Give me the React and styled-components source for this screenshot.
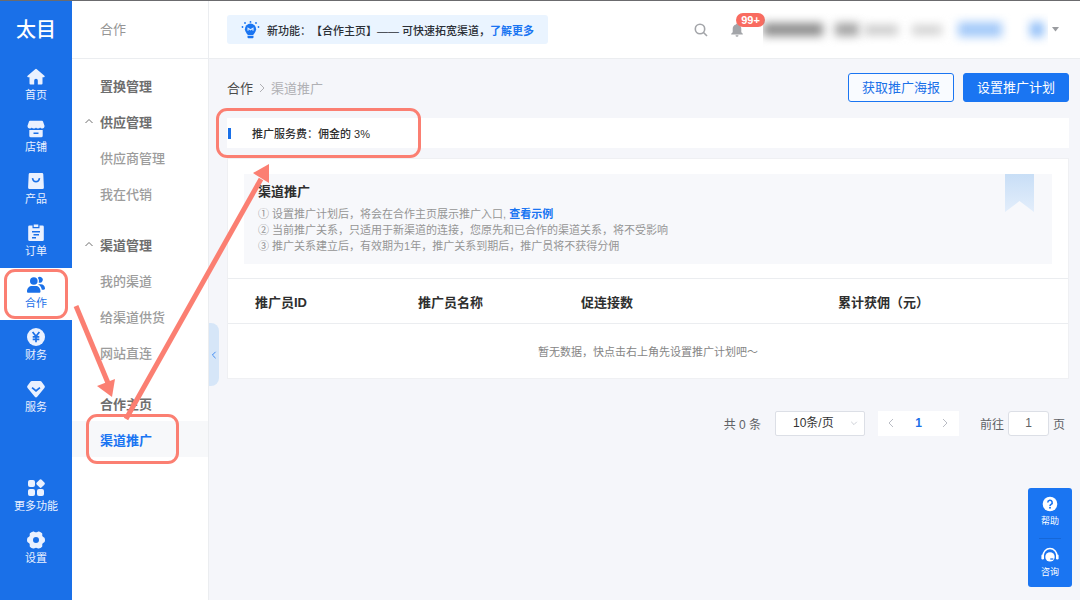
import React from "react";
import styled, { createGlobalStyle, css } from "styled-components";

const color = {
  brand: "#1a70e8",
  link: "#1a75f2",
  page: "#f5f6fa",
  line: "#ebedf0",
  mark: "#fb7f72",
  ink: "#333333",
  muted: "#959595",
};

const GlobalStyle = createGlobalStyle`
  *, *::before, *::after { box-sizing: border-box; }
  body {
    margin: 0;
    background: ${color.page};
    color: ${color.ink};
    font-family: "Liberation Sans", "Noto Sans CJK SC", sans-serif;
    font-size: 11px;
    text-spacing-trim: space-all;
  }
  ul, ol, h1, h2, p { margin: 0; padding: 0; list-style: none; }
  a { color: inherit; text-decoration: none; }
  button, input, select { font: inherit; color: inherit; margin: 0; }
  button { cursor: pointer; }
  svg { display: block; flex: none; }
`;

const Shell = styled.div`
  position: relative;
  display: grid;
  grid-template-columns: 72px 137px minmax(0, 1fr);
  min-height: 100vh;
  border-top: 1px solid #6b6b6e;
`;

/* ---------- primary sidebar ---------- */

const Sidebar = styled.nav`
  display: flex;
  flex-direction: column;
  background: ${color.brand};
  padding-bottom: 25px;
`;

const Logo = styled.div`
  height: 59px;
  line-height: 59px;
  text-align: center;
  font-size: 20px;
  font-weight: 500;
  color: #fff;
`;

const NavList = styled.ul`
  display: flex;
  flex-direction: column;
  ${(p) => p.$bottom && css`margin-top: auto;`}
`;

const NavItem = styled.li`
  position: relative;
`;

const NavLink = styled.a`
  display: flex;
  flex-direction: column;
  align-items: center;
  height: 52px;
  padding-top: 8px;
  line-height: 18px;
  font-size: 11px;
  color: ${(p) => (p.$active ? color.brand : "#eaf1ff")};
  background: ${(p) => (p.$active ? "#fff" : "transparent")};
`;

/* ---------- secondary menu ---------- */

const SubMenu = styled.nav`
  background: #fff;
  border-right: 1px solid ${color.line};
`;

const SubHeader = styled.div`
  height: 58px;
  padding-left: 28px;
  line-height: 58px;
  font-size: 13px;
  color: ${color.muted};
  border-bottom: 1px solid ${color.line};
`;

const SubGroups = styled.div`
  display: flex;
  flex-direction: column;
  gap: 15px;
  padding-top: 8px;
`;

const SubItem = styled.li`
  position: relative;
`;

const SubLink = styled.a`
  display: flex;
  align-items: center;
  height: 36px;
  font-size: 13px;
  font-weight: ${(p) => (p.$kind === "child" ? 500 : 700)};
  color: ${(p) =>
    p.$kind === "active" ? color.link : p.$kind === "child" ? "#9c9c9c" : "#6e6e6e"};
  background: ${(p) => (p.$kind === "active" ? "#f7f8fa" : "transparent")};
`;

const Fold = styled.span`
  display: flex;
  width: 28px;
  padding-left: 12px;
`;

/* ---------- content ---------- */

const Main = styled.main`
  position: relative;
  min-width: 0;
`;

const CollapseTab = styled.button`
  position: absolute;
  top: 322px;
  left: 0;
  display: flex;
  align-items: center;
  justify-content: center;
  width: 10px;
  height: 63px;
  padding: 0;
  border: 0;
  border-radius: 0 8px 8px 0;
  background: #d6e6f8;
  color: ${color.link};
`;

const TopBar = styled.header`
  display: flex;
  align-items: center;
  height: 58px;
  padding: 0 21px 0 18px;
  background: #fff;
  border-bottom: 1px solid ${color.line};
`;

const News = styled.div`
  display: flex;
  align-items: center;
  height: 29px;
  padding: 0 14px;
  gap: 7px;
  border-radius: 3px;
  background: #eaf4ff;
  font-weight: 500;
  color: #2b2f36;
  white-space: nowrap;
`;

const TextLink = styled.a`
  font-weight: 700;
  color: ${color.link};
`;

const Tools = styled.div`
  display: flex;
  align-items: center;
  margin-left: auto;
`;

const IconButton = styled.button`
  position: relative;
  display: flex;
  align-items: center;
  justify-content: center;
  width: 20px;
  height: 20px;
  margin-right: 16px;
  padding: 0;
  border: 0;
  background: none;
  color: #a3a5a9;
`;

const Badge = styled.span`
  position: absolute;
  left: 9px;
  top: -7px;
  width: 29px;
  height: 14px;
  border-radius: 7px;
  background: #f96b60;
  color: #fff;
  font-size: 11px;
  font-weight: 700;
  line-height: 14px;
  text-align: center;
`;

const Masked = styled.div`
  display: flex;
  align-items: center;
  width: 285px;
  height: 34px;
  margin-right: 4px;
  overflow: hidden;
`;

const Smudge = styled.span`
  flex: none;
  width: ${(p) => p.$w}px;
  height: ${(p) => p.$h || 13}px;
  margin-right: ${(p) => p.$gap}px;
  background: ${(p) => p.$tone};
  filter: blur(5px);
`;

const Content = styled.div`
  display: flex;
  flex-direction: column;
  padding: 14px 11px 0 18px;
`;

const HeadRow = styled.div`
  display: flex;
  align-items: center;
  justify-content: space-between;
  height: 29px;
`;

const Crumbs = styled.ol`
  display: flex;
  align-items: center;
  gap: 4px;
  font-size: 13px;
  color: #b0b0b4;

  li:first-child { color: #4a4a4a; }
`;

const Actions = styled.div`
  display: flex;
  gap: 9px;
`;

const Button = styled.button`
  height: 29px;
  padding: 0 13px;
  border: 1px solid ${color.link};
  border-radius: 3px;
  font-size: 13px;
  line-height: 16px;
  color: ${(p) => (p.$primary ? "#fff" : color.brand)};
  background: ${(p) => (p.$primary ? color.link : "#f9fbff")};
`;

const FeeBar = styled.div`
  position: relative;
  display: flex;
  align-items: center;
  gap: 21px;
  height: 30px;
  margin-top: 16px;
  padding-left: 1px;
  background: #fff;
  font-weight: 500;
  color: #2f2f2f;

  &::before {
    content: "";
    width: 3px;
    height: 11px;
    background: ${color.brand};
  }
`;

const Card = styled.section`
  margin-top: 10px;
  background: #fff;
  border: 1px solid #eff0f3;
`;

const Notice = styled.div`
  position: relative;
  margin: 15px 16px 14px;
  padding: 8px 14px 10px;
  background: #f7f8fb;
  line-height: 16px;
  color: ${color.muted};
`;

const NoticeTitle = styled.h2`
  margin-bottom: 4px;
  font-size: 13px;
  line-height: 20px;
  color: #2f2f2f;
`;

const Ribbon = styled.svg`
  position: absolute;
  top: 0;
  right: 18px;
`;

const Table = styled.table`
  width: 100%;
  table-layout: fixed;
  border-collapse: collapse;
`;

const Th = styled.th`
  width: ${(p) => p.$width || "auto"};
  height: 45px;
  padding: 0 0 0 27px;
  border-top: 1px solid ${color.line};
  border-bottom: 1px solid ${color.line};
  text-align: left;
  font-size: 13px;
  font-weight: 700;
  color: #2f2f2f;
`;

const Empty = styled.td`
  height: 54px;
  padding: 0;
  text-align: center;
  color: #858585;
`;

const Pagination = styled.div`
  display: flex;
  align-items: center;
  justify-content: flex-end;
  margin-top: 32px;
  padding-right: 4px;
  font-size: 12px;
  color: #606266;
  white-space: nowrap;
`;

const SelectWrap = styled.div`
  display: grid;
  align-items: center;
  width: 90px;
  margin: 0 13px 0 14px;

  > * { grid-area: 1 / 1; }
  > svg { justify-self: end; margin-right: 7px; pointer-events: none; color: #c0c4cc; }
`;

const PageSize = styled.select`
  appearance: none;
  width: 100%;
  height: 25px;
  padding: 0 17px;
  border: 1px solid #dcdfe6;
  border-radius: 2px;
  background: #fff;
  color: ${color.ink};
`;

const Pager = styled.nav`
  display: flex;
  width: 81px;
  height: 25px;
  margin-right: 21px;
  background: #fff;
`;

const PagerButton = styled.button`
  display: flex;
  flex: 1;
  align-items: center;
  justify-content: center;
  padding: 0;
  border: 0;
  background: none;
  font-weight: 700;
  color: ${(p) => (p.$current ? color.brand : "#b9bcc4")};
`;

const Jump = styled.label`
  display: flex;
  align-items: center;
  gap: 4px;
`;

const JumpInput = styled.input`
  width: 41px;
  height: 25px;
  padding: 0;
  border: 1px solid #dcdfe6;
  border-radius: 3px;
  background: #fff;
  text-align: center;
`;

const HelpDock = styled.aside`
  position: fixed;
  right: 8px;
  bottom: 13px;
  width: 44px;
  padding: 0 11px;
  border-radius: 3px;
  background: ${color.link};
`;

const HelpButton = styled.button`
  display: flex;
  flex-direction: column;
  align-items: center;
  width: 100%;
  height: 50px;
  padding: 8px 0 0;
  border: 0;
  background: none;
  color: #fff;
  font-size: 9px;
  line-height: 18px;
  white-space: nowrap;

  & + & { height: 49px; border-top: 1px solid #1567d8; }
`;

/* ---------- walkthrough marks ---------- */

const Highlight = styled.span`
  position: absolute;
  z-index: 2;
  inset: ${(p) => p.$inset};
  width: ${(p) => p.$width || "auto"};
  border: 3px solid ${color.mark};
  border-radius: 11px;
  pointer-events: none;
`;

const Arrows = styled.svg`
  position: absolute;
  z-index: 3;
  top: 160px;
  left: 70px;
  pointer-events: none;
`;

/* ---------- icons ---------- */

const Icon = ({ children, size = 18 }) => (
  <svg width={size} height={size} viewBox="0 0 18 18" fill="currentColor" aria-hidden="true">
    {children}
  </svg>
);

const Chevron = ({ dir, size = 10 }) => {
  const d = {
    up: "M1.5 7 5 3.5 8.5 7",
    down: "M1.5 3.5 5 7 8.5 3.5",
    left: "M7 1 3 5l4 4",
    right: "M3 1l4 4-4 4",
  }[dir];
  return (
    <svg width={size} height={size} viewBox="0 0 10 10" fill="none" stroke="currentColor" aria-hidden="true">
      <path d={d} />
    </svg>
  );
};

const icons = {
  home: (
    <path d="M8.2 1.2a1.200 1.200 0 0 1 1.600 0l7.600 6.600c.6.500.3 1.400-.5 1.400h-1.400v6.300a1 1 0 0 1-1 1h-3.700v-4a1.800 1.800 0 0 0-3.600 0v4H3.500a1 1 0 0 1-1-1V9.200H1.100c-.8 0-1.100-.9-.5-1.400z" />
  ),
  shop: (
    <path fillRule="evenodd" d="M3 .8h12a1 1 0 0 1 1 .7l1.500 4.300c.2 1.600-.9 2.700-2.200 2.700-.9 0-1.700-.4-2.100-1.100C12.700 8.100 12 8.500 11.100 8.500S9.400 8.100 9 7.400c-.4.700-1.200 1.100-2.100 1.100S5.200 8.100 4.800 7.400c-.4.700-1.200 1.100-2.100 1.100C1.400 8.500.3 7.400.5 5.800L2 1.500a1 1 0 0 1 1-.7zM2.300 10h13.400v5.700a1.500 1.500 0 0 1-1.500 1.500H3.800a1.500 1.500 0 0 1-1.500-1.500zm4.200 2.600v1.500h5v-1.500z" />
  ),
  product: (
    <path fillRule="evenodd" d="M3 1h12a1.300 1.300 0 0 1 1.300 1.200l.6 13.300A1.500 1.500 0 0 1 15.400 17H2.600a1.500 1.500 0 0 1-1.500-1.500l.6-13.300A1.300 1.300 0 0 1 3 1zM4.700 6.200c.4 2.700 2.100 4.300 4.300 4.300s3.900-1.600 4.300-4.300l-1.600-.3C11.400 7.800 10.400 8.800 9 8.800S6.600 7.800 6.300 5.900z" />
  ),
  order: (
    <path fillRule="evenodd" d="M2.500 1.500h3v2.700h7V1.500h3A1.300 1.300 0 0 1 16.800 2.800v13a1.300 1.300 0 0 1-1.300 1.300h-13a1.300 1.300 0 0 1-1.300-1.300v-13a1.300 1.300 0 0 1 1.300-1.300zM6.700.4h4.600v2.500H6.700zM5 7v1.500h8V7zm1.500 3v1.500H12V10zM5 13v1.400h4V13z" />
  ),
  team: (
    <>
      <circle cx="6.800" cy="5" r="3.800" />
      <path d="M0 15.500C0 12 2.300 10 5 10h3.600c2.800 0 4.900 2 4.900 5.500 0 .8-.5 1.300-1.300 1.300H1.300c-.8 0-1.300-.5-1.300-1.300z" />
      <path d="M11.700 6.400a5.200 5.200 0 0 0-.9-4.700 2.900 2.900 0 1 1 .9 4.700zM11 8.300h2.800c2.500 0 4.200 1.600 4.200 4.200 0 .7-.5 1.200-1.200 1.200h-2c-.4-2.500-1.700-4.400-3.800-5.400z" />
    </>
  ),
  finance: (
    <>
      <circle cx="9" cy="9" r="9" />
      <path d="M5.600 4 9 8.300 12.400 4M9 8.300v6M5.700 8.800h6.600M5.700 11.400h6.600" fill="none" stroke={color.brand} strokeWidth="1.700" />
    </>
  ),
  service: (
    <path fillRule="evenodd" d="M4.800 1h8.400a1.600 1.600 0 0 1 1.200.5l3.100 4.200c.5.700.5 1.600-.1 2.300l-7.200 8.700a1.500 1.500 0 0 1-2.400 0L.6 8C0 7.300 0 6.400.5 5.700l3.100-4.200A1.600 1.600 0 0 1 4.800 1zM5.600 7 4.500 8.200 9 12l4.500-3.800L12.400 7 9 9.800z" />
  ),
  more: (
    <>
      <rect x="1" y="1" width="7" height="7" rx="2" />
      <rect x="1" y="10" width="7" height="7" rx="2" />
      <rect x="10" y="10" width="7" height="7" rx="2" />
      <rect x="10.200" y="1.200" width="6.800" height="6.800" rx="1.500" transform="rotate(45 13.600 4.600)" />
    </>
  ),
  settings: (
    <path fillRule="evenodd" d="M6.200.5c1 0 1.600.8 2.800.8s1.800-.8 2.800-.8c1.300.2 2.500.9 3.300 1.800.5 1-.2 1.900.4 3s1.800.9 2.200 1.900c.4 1.200.4 2.400 0 3.600-.4 1-1.600.9-2.200 1.900s.1 2-.4 3a6 6 0 0 1-3.300 1.800c-1 0-1.600-.8-2.800-.8s-1.800.8-2.800.8a6 6 0 0 1-3.300-1.800c-.5-1 .2-2-.4-3S.7 11.800.3 10.800a6 6 0 0 1 0-3.600c.4-1 1.600-.8 2.200-1.900s-.1-2 .4-3A6 6 0 0 1 6.200.5zM9 6a3 3 0 1 0 0 6 3 3 0 0 0 0-6z" />
  ),
};

const BulbIcon = () => (
  <svg width="19" height="18" viewBox="0 0 19 18" aria-hidden="true">
    <g fill={color.link}>
      <circle cx="9.500" cy="8.200" r="5.600" />
      <path d="M6.500 12h6v2h-6zM6.500 14.800h6v1.400a1 1 0 0 1-1 1h-4a1 1 0 0 1-1-1z" />
      <circle cx="1.500" cy="6" r=".9" />
      <circle cx="17.500" cy="6" r=".9" />
      <circle cx="4" cy="2" r=".9" />
      <circle cx="15" cy="2" r=".9" />
      <circle cx="9.500" cy=".9" r=".9" />
    </g>
    <path d="M7 9.800V7.200l2.500 1.600L12 7.200v2.600" fill="none" stroke="#d8eaff" strokeWidth="1.100" />
  </svg>
);

const SearchIcon = () => (
  <svg width="14" height="14" viewBox="0 0 14 14" fill="none" stroke="currentColor" strokeWidth="1.600" aria-hidden="true">
    <circle cx="6" cy="6" r="4.700" />
    <path d="m9.500 9.500 3.500 3.500" />
  </svg>
);

const BellIcon = () => (
  <svg width="14" height="14" viewBox="0 0 14 14" fill="currentColor" aria-hidden="true">
    <path d="M7 .5a1 1 0 0 1 1 1c2 .5 3.300 2.200 3.300 4.300v3.400l1.500 1.500v.8H1.200v-.8l1.500-1.500V5.800C2.700 3.700 4 2 6 1.500a1 1 0 0 1 1-1zM5.500 12.300h3a1.500 1.500 0 0 1-3 0z" />
  </svg>
);

const CaretIcon = () => (
  <svg width="7" height="5" viewBox="0 0 7 5" fill="#9a9ca0" aria-hidden="true">
    <path d="M0 0h7L3.500 4.500z" />
  </svg>
);

const QuestionIcon = () => (
  <svg width="16" height="16" viewBox="0 0 16 16" aria-hidden="true">
    <circle cx="8" cy="8" r="7.300" fill="#fff" />
    <path d="M5.800 6.500a2.200 2.200 0 1 1 3.300 1.900c-.8.500-1.100.8-1.100 1.500" fill="none" stroke={color.link} strokeWidth="1.600" />
    <circle cx="8" cy="11.700" r="1" fill={color.link} />
  </svg>
);

const HeadsetIcon = () => (
  <svg width="18" height="16" viewBox="0 0 18 16" aria-hidden="true">
    <path d="M2 9a7 7.500 0 0 1 14 0" fill="none" stroke="#fff" strokeWidth="1.500" />
    <rect x=".4" y="7.500" width="2.600" height="5" rx="1.200" fill="#fff" />
    <rect x="15" y="7.500" width="2.600" height="5" rx="1.200" fill="#fff" />
    <circle cx="9" cy="9.900" r="4.700" fill="#fff" />
    <path d="M9.300 12h3" stroke={color.link} strokeWidth="1.300" />
  </svg>
);

/* ---------- data ---------- */

const mainNav = [
  ["home", "首页"],
  ["shop", "店铺"],
  ["product", "产品"],
  ["order", "订单"],
  ["team", "合作"],
  ["finance", "财务"],
  ["service", "服务"],
];

const bottomNav = [
  ["more", "更多功能"],
  ["settings", "设置"],
];

const subNav = [
  [
    { label: "置换管理", kind: "parent" },
    { label: "供应管理", kind: "parent", fold: true },
    { label: "供应商管理", kind: "child" },
    { label: "我在代销", kind: "child" },
  ],
  [
    { label: "渠道管理", kind: "parent", fold: true },
    { label: "我的渠道", kind: "child" },
    { label: "给渠道供货", kind: "child" },
    { label: "网站直连", kind: "child" },
  ],
  [
    { label: "合作主页", kind: "parent" },
    { label: "渠道推广", kind: "active" },
  ],
];

const smudges = [
  { $w: 60, $gap: 12, $tone: "#8c8c8c" },
  { $w: 24, $gap: 5, $tone: "#a3a3a3" },
  { $w: 34, $gap: 14, $tone: "#cacaca", $h: 10 },
  { $w: 30, $gap: 16, $tone: "#d2d2d2", $h: 10 },
  { $w: 44, $gap: 28, $tone: "#a4caf9", $h: 15 },
  { $w: 14, $gap: 0, $tone: "#93c0f8", $h: 15 },
];

function NavEntry({ icon, label, active }) {
  return (
    <NavItem>
      <NavLink href="#" $active={active} aria-current={active ? "page" : undefined}>
        <Icon>{icons[icon]}</Icon>
        {label}
      </NavLink>
      {active && <Highlight $inset="1px 4px" />}
    </NavItem>
  );
}

export default function App() {
  return (
    <>
      <GlobalStyle />
      <Shell>
        <Sidebar aria-label="主导航">
          <Logo>太目</Logo>
          <NavList>
            {mainNav.map(([icon, label]) => (
              <NavEntry key={icon} icon={icon} label={label} active={icon === "team"} />
            ))}
          </NavList>
          <NavList $bottom>
            {bottomNav.map(([icon, label]) => (
              <NavEntry key={icon} icon={icon} label={label} />
            ))}
          </NavList>
        </Sidebar>

        <SubMenu aria-label="合作">
          <SubHeader>合作</SubHeader>
          <SubGroups>
            {subNav.map((group) => (
              <ul key={group[0].label}>
                {group.map(({ label, kind, fold }) => (
                  <SubItem key={label}>
                    <SubLink href="#" $kind={kind}>
                      <Fold>{fold && <Chevron dir="up" />}</Fold>
                      {label}
                    </SubLink>
                    {kind === "active" && <Highlight $inset="-7px 29px -7px 14px" />}
                  </SubItem>
                ))}
              </ul>
            ))}
          </SubGroups>
        </SubMenu>

        <Main>
          <TopBar>
            <News>
              <BulbIcon />
              <span>
                新功能：【合作主页】—— 可快速拓宽渠道，<TextLink href="#">了解更多</TextLink>
              </span>
            </News>
            <Tools>
              <IconButton type="button" aria-label="搜索">
                <SearchIcon />
              </IconButton>
              <IconButton type="button" aria-label="消息">
                <BellIcon />
                <Badge>99+</Badge>
              </IconButton>
              <Masked>
                {smudges.map((s, i) => (
                  <Smudge key={i} {...s} />
                ))}
              </Masked>
              <CaretIcon />
            </Tools>
          </TopBar>

          <CollapseTab type="button" aria-label="收起菜单">
            <Chevron dir="left" size={8} />
          </CollapseTab>

          <Content>
            <HeadRow>
              <Crumbs>
                <li>合作</li>
                <li aria-hidden="true">
                  <Chevron dir="right" />
                </li>
                <li>渠道推广</li>
              </Crumbs>
              <Actions>
                <Button type="button">获取推广海报</Button>
                <Button type="button" $primary>设置推广计划</Button>
              </Actions>
            </HeadRow>

            <FeeBar>
              推广服务费：佣金的 3%
              <Highlight $inset="-10px auto -10px -11px" $width="205px" />
            </FeeBar>

            <Card>
              <Notice>
                <NoticeTitle>渠道推广</NoticeTitle>
                <p>
                  ① 设置推广计划后，将会在合作主页展示推广入口, <TextLink href="#">查看示例</TextLink>
                </p>
                <p>② 当前推广关系，只适用于新渠道的连接，您原先和已合作的渠道关系，将不受影响</p>
                <p>③ 推广关系建立后，有效期为1年，推广关系到期后，推广员将不获得分佣</p>
                <Ribbon width="29" height="38" viewBox="0 0 29 38" aria-hidden="true">
                  <defs>
                    <linearGradient id="ribbon" x1="0" y1="0" x2="0" y2="1">
                      <stop offset="0" stopColor="#c8def6" />
                      <stop offset="1" stopColor="#e3eefb" />
                    </linearGradient>
                  </defs>
                  <path d="M0 0h29v38L14.500 27 0 38z" fill="url(#ribbon)" />
                </Ribbon>
              </Notice>
              <Table>
                <thead>
                  <tr>
                    <Th $width="19.4%">推广员ID</Th>
                    <Th $width="19.4%">推广员名称</Th>
                    <Th $width="30.6%">促连接数</Th>
                    <Th>累计获佣（元）</Th>
                  </tr>
                </thead>
                <tbody>
                  <tr>
                    <Empty colSpan={4}>暂无数据，快点击右上角先设置推广计划吧～</Empty>
                  </tr>
                </tbody>
              </Table>
            </Card>

            <Pagination>
              <span>共 0 条</span>
              <SelectWrap>
                <PageSize aria-label="每页条数" defaultValue="10">
                  <option value="10">10条/页</option>
                  <option value="20">20条/页</option>
                </PageSize>
                <Chevron dir="down" size={8} />
              </SelectWrap>
              <Pager aria-label="分页">
                <PagerButton type="button" aria-label="上一页">
                  <Chevron dir="left" />
                </PagerButton>
                <PagerButton type="button" $current>1</PagerButton>
                <PagerButton type="button" aria-label="下一页">
                  <Chevron dir="right" />
                </PagerButton>
              </Pager>
              <Jump>
                前往
                <JumpInput type="text" defaultValue="1" />
                页
              </Jump>
            </Pagination>
          </Content>
        </Main>

        <Arrows width="204" height="264" viewBox="0 0 204 264" fill={color.mark} aria-hidden="true">
          <path d="M6 145 38 222" stroke={color.mark} strokeWidth="5" />
          <path d="M42 236 27 225 45 218z" />
          <path d="M56 258 191 18" stroke={color.mark} strokeWidth="5" />
          <path d="M199 3 183 12 199 22z" />
        </Arrows>
      </Shell>

      <HelpDock>
        <HelpButton type="button">
          <QuestionIcon />
          帮助
        </HelpButton>
        <HelpButton type="button">
          <HeadsetIcon />
          咨询
        </HelpButton>
      </HelpDock>
    </>
  );
}
